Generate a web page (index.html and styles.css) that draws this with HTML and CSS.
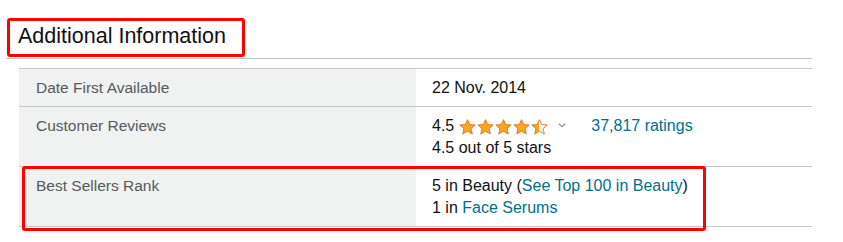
FILE: index.html
```html
<!DOCTYPE html>
<html lang="en">
<head>
<meta charset="utf-8">
<title>Additional Information</title>
<link rel="stylesheet" href="styles.css">
</head>
<body>
<div class="page">
  <div class="section">
    <h2 class="title">Additional Information</h2>
    <div class="table">
      <div class="row">
        <div class="label">Date First Available</div>
        <div class="value">22 Nov. 2014</div>
      </div>
      <div class="row">
        <div class="label">Customer Reviews</div>
        <div class="value">
          <div class="rating-line">
            <span class="score">4.5</span>
            <span class="stars">
              <svg class="star" viewBox="0 0 16 15"><polygon points="8,0.6 10.1,5.2 15.2,5.6 11.3,9 12.5,14.1 8,11.4 3.5,14.1 4.7,9 0.8,5.6 5.9,5.2" class="full"/></svg>
              <svg class="star" viewBox="0 0 16 15"><polygon points="8,0.6 10.1,5.2 15.2,5.6 11.3,9 12.5,14.1 8,11.4 3.5,14.1 4.7,9 0.8,5.6 5.9,5.2" class="full"/></svg>
              <svg class="star" viewBox="0 0 16 15"><polygon points="8,0.6 10.1,5.2 15.2,5.6 11.3,9 12.5,14.1 8,11.4 3.5,14.1 4.7,9 0.8,5.6 5.9,5.2" class="full"/></svg>
              <svg class="star" viewBox="0 0 16 15"><polygon points="8,0.6 10.1,5.2 15.2,5.6 11.3,9 12.5,14.1 8,11.4 3.5,14.1 4.7,9 0.8,5.6 5.9,5.2" class="full"/></svg>
              <svg class="star" viewBox="0 0 16 15"><defs><linearGradient id="half" x1="0" x2="1" y1="0" y2="0"><stop offset="0.5" stop-color="#FFA41C"/><stop offset="0.5" stop-color="#FFFFFF"/></linearGradient></defs><polygon points="8,0.6 10.1,5.2 15.2,5.6 11.3,9 12.5,14.1 8,11.4 3.5,14.1 4.7,9 0.8,5.6 5.9,5.2" class="half"/></svg>
            </span>
            <svg class="caret" viewBox="0 0 8 5"><polyline points="0.8,0.8 4,3.8 7.2,0.8"/></svg>
            <a class="link ratings" href="#">37,817 ratings</a>
          </div>
          <div>4.5 out of 5 stars</div>
        </div>
      </div>
      <div class="row">
        <div class="label">Best Sellers Rank</div>
        <div class="value">
          <div>5 in Beauty (<a class="link" href="#">See Top 100 in Beauty</a>)</div>
          <div>1 in <a class="link" href="#">Face Serums</a></div>
        </div>
      </div>
    </div>
  </div>
  <div class="mark mark-title"></div>
  <div class="mark mark-rank"></div>
</div>
</body>
</html>
```
FILE: styles.css
```css
html, body {
  margin: 0;
  padding: 0;
  background: #ffffff;
}

body {
  font-family: "Liberation Sans", Arial, sans-serif;
  color: #0F1111;
}

.page {
  position: relative;
  width: 843px;
  height: 242px;
}

.section {
  width: 806px;
  padding-left: 6px;
}

.title {
  margin: 0;
  padding: 22px 0 8px 12px;
  font-size: 21.5px;
  font-weight: 400;
  line-height: 28px;
  color: #0F1111;
  border-bottom: 1px solid #c4c4c4;
}

.table {
  margin: 9px 0 0 13px;
  border-bottom: 1px solid #c8c8c8;
}

.row {
  display: grid;
  grid-template-columns: 397px 1fr;
  border-top: 1px solid #c8c8c8;
}

.label,
.value {
  font-size: 15.5px;
  line-height: 22px;
  padding: 8px 16px 7px;
}

.label {
  background: #f0f2f2;
  color: #565959;
  padding-left: 17px;
}

.value {
  font-size: 16px;
  color: #0F1111;
}

.rating-line {
  display: flex;
  align-items: center;
  height: 22px;
}

.score {
  margin-right: 5px;
}

.stars {
  display: flex;
  gap: 1px;
  margin-top: 2px;
}

.star {
  width: 17px;
  height: 16px;
}

.star polygon {
  stroke: #DE7921;
  stroke-width: 0.9;
  stroke-linejoin: round;
}

.star .full {
  fill: #FFA41C;
}

.star .half {
  fill: url(#half);
}

.caret {
  width: 8px;
  height: 5px;
  margin-left: 10px;
  margin-top: -2px;
  fill: none;
  stroke: #8d9096;
  stroke-width: 1.2;
}

.ratings {
  margin-left: 25px;
}

.link {
  color: #007185;
  text-decoration: none;
}

.mark {
  position: absolute;
  border: 3px solid #ff0000;
  border-radius: 3px;
  box-sizing: border-box;
  pointer-events: none;
}

.mark-title {
  left: 7px;
  top: 18px;
  width: 238px;
  height: 39px;
}

.mark-rank {
  left: 22px;
  top: 166px;
  width: 684px;
  height: 65px;
}
```
